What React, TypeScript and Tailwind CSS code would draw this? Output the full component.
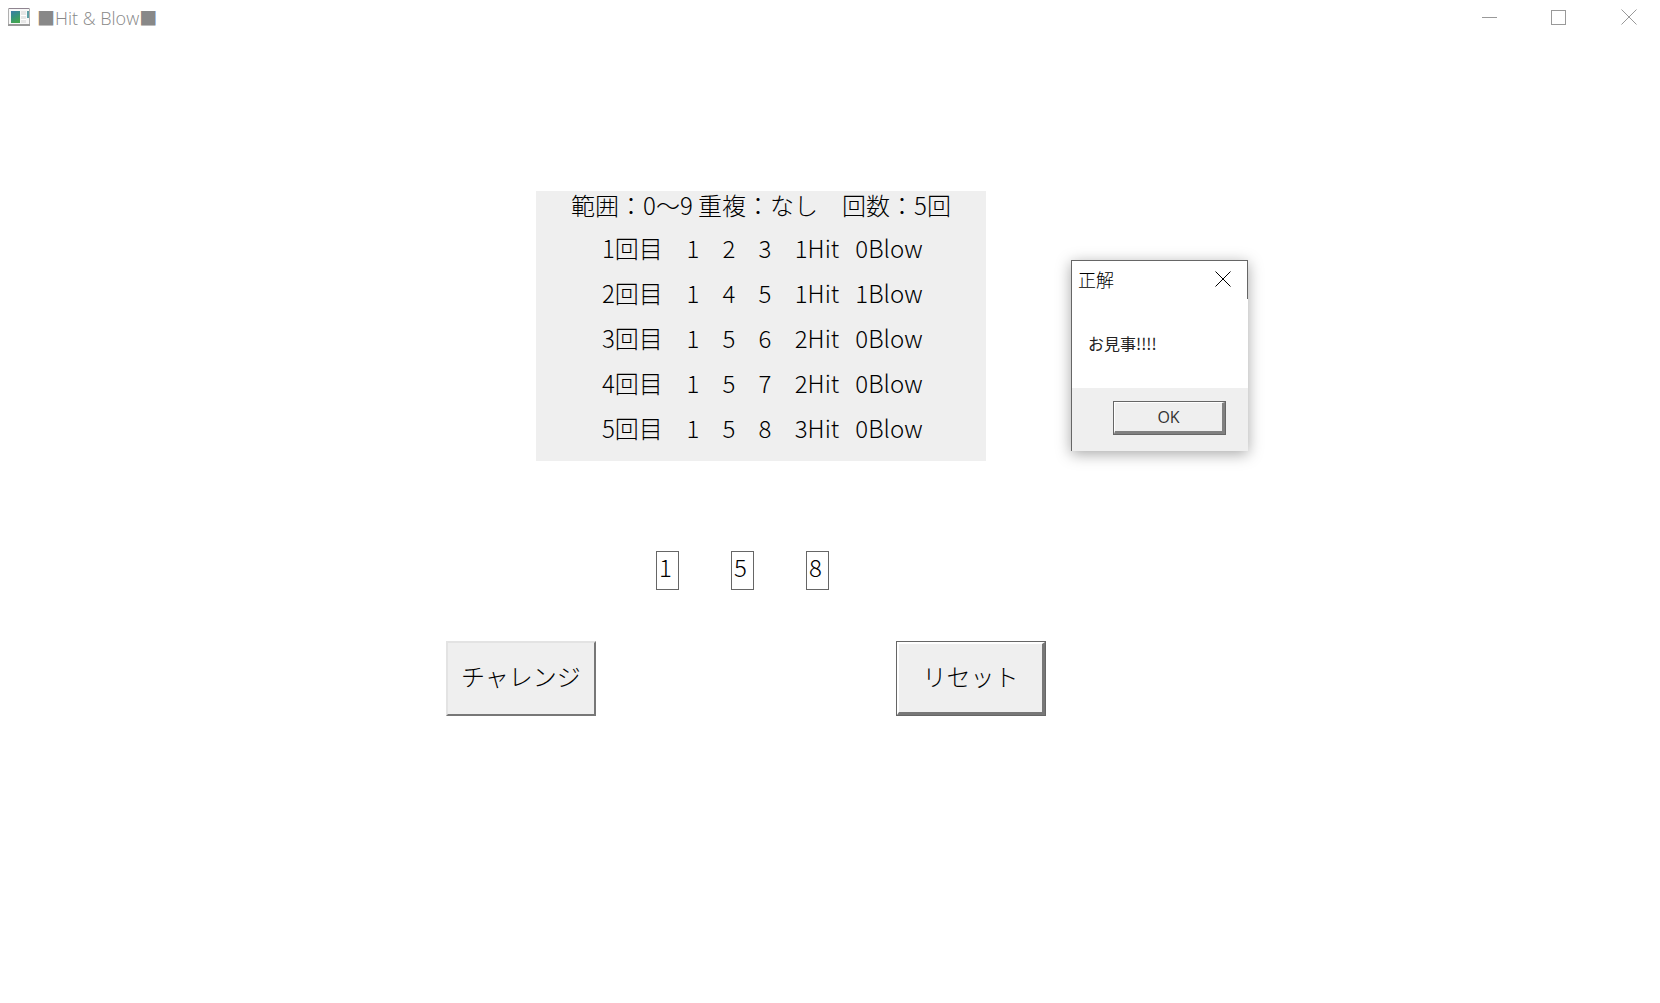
const rows = [
  { round: 1, guess: [1, 2, 3], hit: 1, blow: 0 },
  { round: 2, guess: [1, 4, 5], hit: 1, blow: 1 },
  { round: 3, guess: [1, 5, 6], hit: 2, blow: 0 },
  { round: 4, guess: [1, 5, 7], hit: 2, blow: 0 },
  { round: 5, guess: [1, 5, 8], hit: 3, blow: 0 },
];

function Cross() {
  return (
    <svg width="16" height="16" viewBox="0 0 16 16" stroke="currentColor" fill="none" aria-hidden="true">
      <path d="M.5 .5l15 15M15.5 .5l-15 15" />
    </svg>
  );
}

function TitleBar() {
  return (
    <header className="flex h-9 items-center pb-0.5 pl-2 font-['Open_Sans','Noto_Sans_CJK_JP',sans-serif] text-[#999]">
      <svg width="23" height="19" viewBox="0 0 23 19" aria-hidden="true">
        <defs>
          <linearGradient id="scene" x1="0" y1="0" x2=".4" y2="1">
            <stop offset="0" stopColor="#3b7ba8" />
            <stop offset=".5" stopColor="#36917f" />
            <stop offset="1" stopColor="#42a552" />
          </linearGradient>
        </defs>
        <path d="M.5 .5h21v17H.5z" fill="#f8f8f8" stroke="#b0b0b0" />
        <path d="M0 17h22" stroke="#999" strokeWidth="2" />
        <path d="M1 .5h20" stroke="#8f8490" />
        <path d="M3 3h9v12H3z" fill="url(#scene)" />
        <path d="M13 3h5v12h-5z" fill="#e6e6e6" />
        <path d="M13 7.500h5M13 11.500h5" stroke="#fff" />
        <path d="M19 3h2v7h-2z" fill="#5c9fa5" />
      </svg>
      <h1 className="mt-0.5 ml-1.5 grow text-lg leading-6 font-light text-[#888]">■Hit &amp; Blow■</h1>
      <div className="flex h-full">
        <button aria-label="最小化" className="grid w-[69px] place-items-center">
          <span className="h-px w-[15px] bg-[#999]" />
        </button>
        <button aria-label="最大化" className="grid w-[69px] place-items-center">
          <span className="size-[15px] border border-[#999]" />
        </button>
        <button aria-label="閉じる" className="grid w-[67px] place-items-center pl-1">
          <Cross />
        </button>
      </div>
    </header>
  );
}

function Results() {
  return (
    <section className="mr-[60px] ml-[90px] bg-[#efefef] pb-[9px]">
      <h2 className="h-9 text-center text-2xl leading-7 font-light whitespace-pre">範囲：0〜9 重複：なし　回数：5回</h2>
      <table className="ml-[66px] border-collapse text-center text-2xl font-light">
        <tbody>
          {rows.map((r) => (
            <tr key={r.round} className="h-[45px]">
              <th scope="row" className="w-[73px] p-0 pb-1 text-left font-light">{r.round}回目</th>
              {r.guess.map((n, i) => (
                <td key={i} className="w-9 p-0 pb-1">{n}</td>
              ))}
              <td className="w-[68px] p-0 pb-1">{r.hit}Hit</td>
              <td className="w-[76px] p-0 pb-1">{r.blow}Blow</td>
            </tr>
          ))}
        </tbody>
      </table>
    </section>
  );
}

function AnswerDialog() {
  return (
    <div
      role="dialog"
      aria-labelledby="dialog-title"
      className="absolute top-[69px] left-[625px] w-[177px] bg-white shadow-[0_3px_14px_rgba(0,0,0,0.35)]"
    >
      <div className="flex h-[39px] items-center justify-between border-x border-t border-[#666] pr-4 pb-0.5 pl-1.5">
        <h2 id="dialog-title" className="text-lg leading-6 font-light">正解</h2>
        <button aria-label="閉じる">
          <Cross />
        </button>
      </div>
      <div className="border-l border-[#666]">
        <p className="h-[89px] pt-8 pl-4 text-base leading-6 text-[#222]">お見事!!!!</p>
        <div className="flex justify-end bg-[#efefef] pt-[13px] pr-[22px] pb-4">
          <button className="border border-[#666] bg-[#efefef] text-[#333]">
            <span className="block h-8 w-[111px] border-t border-r-3 border-b-3 border-l border-t-white border-r-[#808080] border-b-[#808080] border-l-white font-['Open_Sans',sans-serif] text-base leading-7">
              OK
            </span>
          </button>
        </div>
      </div>
    </div>
  );
}

export default function App() {
  return (
    <div className="min-h-screen bg-white font-['Noto_Sans_CJK_JP',sans-serif] text-black">
      <TitleBar />
      <main className="relative mt-[155px] ml-[446px] w-[600px]">
        <Results />
        <form onSubmit={(e) => e.preventDefault()}>
          <div className="mt-[90px] ml-[210px] flex gap-[52px]">
            {[1, 5, 8].map((n, i) => (
              <input
                key={i}
                aria-label={`${i + 1}桁目`}
                defaultValue={n}
                maxLength={1}
                className="h-[39px] w-[23px] border border-[#666] pb-2 pl-0.5 text-2xl leading-7 font-light outline-none"
              />
            ))}
          </div>
          <div className="mt-[51px] flex justify-between">
            <button className="h-[75px] w-[150px] border-2 border-t-[#e3e3e3] border-r-[#777] border-b-[#777] border-l-[#e3e3e3] bg-[#efefef] pb-1.5 text-2xl font-light">
              チャレンジ
            </button>
            <button type="reset" className="h-[75px] w-[150px] border border-[#666] bg-[#efefef] text-2xl font-light">
              <span className="grid size-full place-items-center border-t-2 border-r-3 border-b-3 border-l-2 border-t-white border-r-[#777] border-b-[#777] border-l-white pb-1">
                リセット
              </span>
            </button>
          </div>
        </form>
        <AnswerDialog />
      </main>
    </div>
  );
}
